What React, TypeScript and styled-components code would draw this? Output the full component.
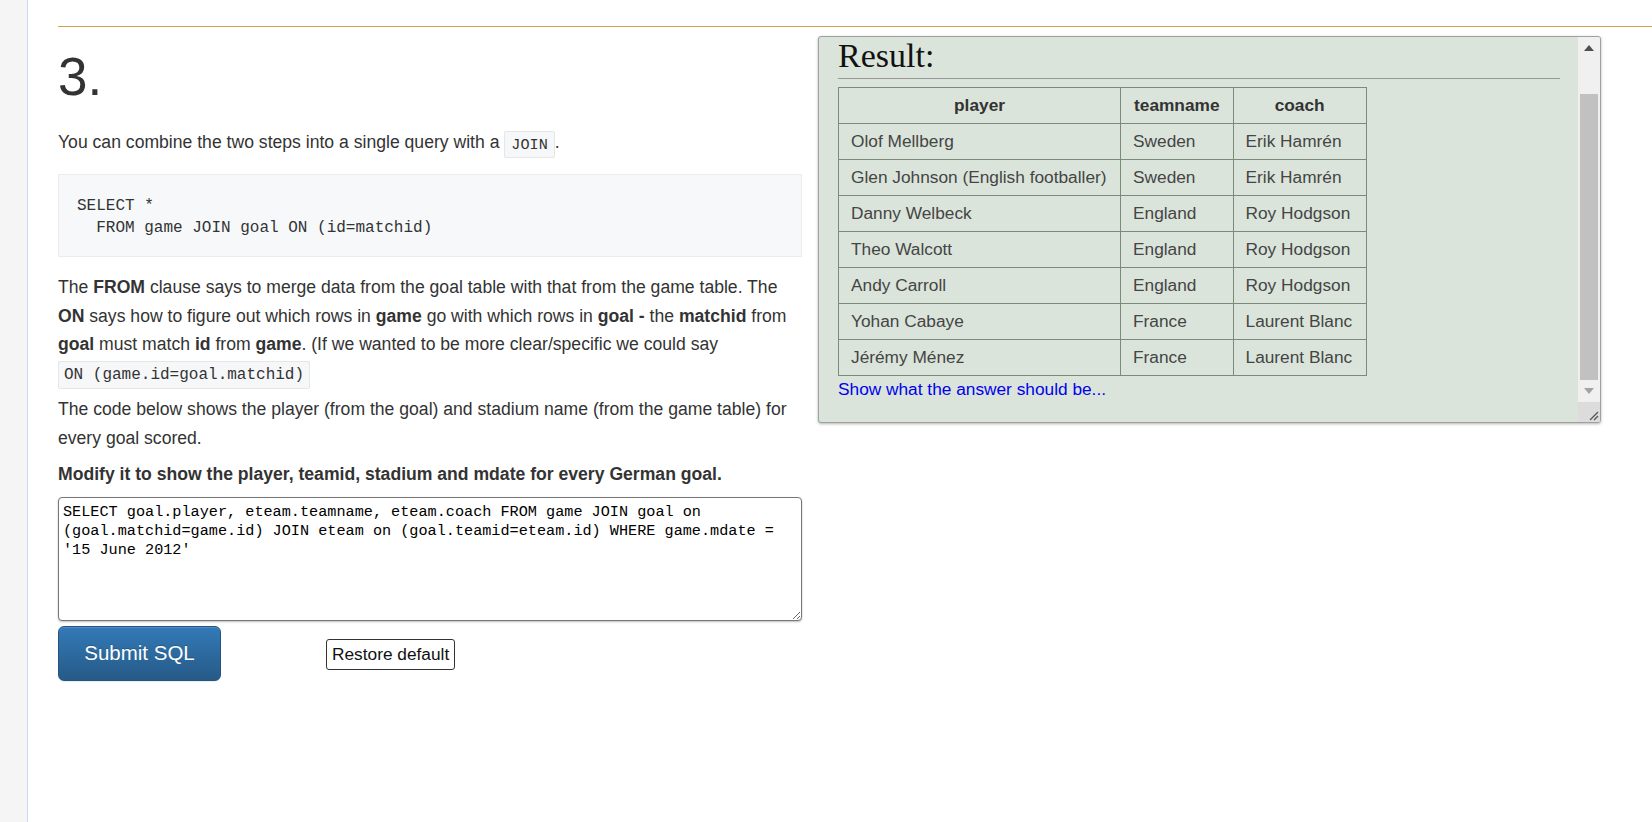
import React from "react";
import styled, { createGlobalStyle } from "styled-components";

const GlobalStyle = createGlobalStyle`
  html, body { margin: 0; padding: 0; background: #fff; }
  body { font-family: "Liberation Sans", Arial, sans-serif; color: #333; }
  * { box-sizing: border-box; }
`;

const Page = styled.div`
  display: flex;
  min-height: 822px;
`;

const LeftStrip = styled.div`
  width: 28px;
  flex: none;
  background: #f5f5f5;
  border-right: 1px solid #c5dcef;
`;

const Main = styled.div`
  flex: 1;
  padding-left: 30px;
`;

const Rule = styled.div`
  margin-top: 26px;
  border-top: 1px solid #d3a14f;
`;

const Row = styled.div`
  display: flex;
  align-items: flex-start;
  gap: 16px;
`;

const LeftCol = styled.div`
  width: 744px;
  flex: none;
`;

const Heading = styled.h1`
  margin: 21px 0 22px;
  font-size: 53px;
  line-height: 1.1;
  font-weight: 400;
  color: #333;
`;

const P = styled.p`
  margin: 0 0 7.5px;
  font-size: 17.6px;
  line-height: 28.8px;
  color: #333;
`;

const StrongP = styled(P)`
  font-weight: 700;
`;

const InlineCode = styled.code<{ $size: number; $pad: string }>`
  font-family: "Liberation Mono", monospace;
  font-size: ${(p) => p.$size}px;
  line-height: 1;
  padding: ${(p) => p.$pad};
  background: #f6f7f8;
  border: 1px solid #e6e6e6;
  border-radius: 2px;
  color: #333;
  white-space: nowrap;
`;

const Pre = styled.pre`
  margin: 17px 0 16px;
  padding: 19.8px 18px 16px;
  background: #f6f8fa;
  border: 1px solid #ececec;
  font-family: "Liberation Mono", monospace;
  font-size: 16px;
  line-height: 22.4px;
  color: #333;
`;

const SqlArea = styled.textarea`
  display: block;
  width: 744px;
  height: 124px;
  margin: 0;
  padding: 5.6px 4px;
  border: 1px solid #767676;
  border-radius: 4px;
  box-shadow: 0 1px 2px rgba(0, 0, 0, 0.25);
  font-family: "Liberation Mono", monospace;
  font-size: 15.2px;
  line-height: 18.7px;
  color: #000;
  background: #fff;
  resize: both;
`;

const ButtonRow = styled.div`
  display: flex;
  align-items: center;
  gap: 105px;
  margin-top: 5px;
`;

const SubmitButton = styled.button`
  width: 163px;
  height: 55px;
  padding: 0;
  border: 1px solid #245580;
  border-radius: 6px;
  background: linear-gradient(to bottom, #337ab7 0%, #265a88 100%);
  color: #fff;
  font-family: "Liberation Sans", Arial, sans-serif;
  font-size: 20.5px;
  text-shadow: 0 -1px 0 rgba(0, 0, 0, 0.2);
  box-shadow: inset 0 1px 0 rgba(255, 255, 255, 0.15), 0 1px 1px rgba(0, 0, 0, 0.075);
`;

const RestoreButton = styled.button`
  height: 31px;
  padding: 0 5px;
  margin-top: 3px;
  border: 1px solid #333;
  border-radius: 3px;
  background: #fff;
  color: #111;
  font-family: "Liberation Sans", Arial, sans-serif;
  font-size: 17.3px;
  line-height: 21px;
`;

const ResultBox = styled.div`
  margin-top: 9px;
  width: 783px;
  height: 387px;
  flex: none;
  display: flex;
  background: #dae4da;
  border: 1px solid #a0a0a0;
  border-radius: 3px;
  box-shadow: 0 1px 3px rgba(0, 0, 0, 0.3);
  overflow: hidden;
`;

const ResultContent = styled.div`
  flex: 1;
  padding: 0 18px 0 19px;
  overflow: hidden;
`;

const ResultTitle = styled.h2`
  margin: 0;
  padding-bottom: 4px;
  border-bottom: 1px solid #999;
  font-family: "Liberation Serif", "Times New Roman", serif;
  font-size: 34px;
  font-weight: 400;
  line-height: 37px;
  color: #111;
`;

const Table = styled.table`
  margin-top: 8px;
  border-collapse: collapse;
  font-size: 17.3px;
  line-height: 19px;
`;

const Th = styled.th`
  padding: 8px 13px;
  border: 1px solid #7b8a7b;
  font-weight: 700;
  text-align: center;
  color: #333;
`;

const Td = styled.td`
  padding: 8px 13.5px 8px 12px;
  border: 1px solid #7b8a7b;
  text-align: left;
  color: #454545;
  white-space: nowrap;
`;

const AnswerLink = styled.a`
  display: block;
  font-size: 17.3px;
  line-height: 26px;
  color: #0000ee;
  text-decoration: none;
`;

const ScrollBar = styled.div`
  width: 22px;
  flex: none;
  display: flex;
  flex-direction: column;
  background: #f0f0f0;
`;

const ScrollButton = styled.div`
  height: 22px;
  flex: none;
  display: flex;
  align-items: center;
  justify-content: center;
`;

const Arrow = styled.div<{ $up: boolean; $dim: boolean }>`
  width: 0;
  height: 0;
  border-left: 5.5px solid transparent;
  border-right: 5.5px solid transparent;
  ${(p) =>
    p.$up
      ? `border-bottom: 6px solid ${p.$dim ? "#a3a3a3" : "#505050"};`
      : `border-top: 6px solid ${p.$dim ? "#a3a3a3" : "#505050"};`}
`;

const Track = styled.div`
  flex: 1;
  display: flex;
  flex-direction: column;
  padding: 0 2px;
`;

const Thumb = styled.div<{ $offset: number }>`
  margin-top: ${(p) => p.$offset}px;
  flex: 1;
  background: #c1c1c1;
`;

const Corner = styled.div`
  height: 20px;
  flex: none;
  background: #dcdcdc;
  display: flex;
  align-items: flex-end;
  justify-content: flex-end;
`;

const rows: [string, string, string][] = [
  ["Olof Mellberg", "Sweden", "Erik Hamrén"],
  ["Glen Johnson (English footballer)", "Sweden", "Erik Hamrén"],
  ["Danny Welbeck", "England", "Roy Hodgson"],
  ["Theo Walcott", "England", "Roy Hodgson"],
  ["Andy Carroll", "England", "Roy Hodgson"],
  ["Yohan Cabaye", "France", "Laurent Blanc"],
  ["Jérémy Ménez", "France", "Laurent Blanc"],
];

const sql =
  "SELECT goal.player, eteam.teamname, eteam.coach FROM game JOIN goal on (goal.matchid=game.id) JOIN eteam on (goal.teamid=eteam.id) WHERE game.mdate = '15 June 2012'";

export default function App() {
  return (
    <>
      <GlobalStyle />
      <Page>
        <LeftStrip />
        <Main>
          <Rule />
          <Row>
            <LeftCol>
              <Heading>3.</Heading>
              <P>
                You can combine the two steps into a single query with a{" "}
                <InlineCode $size={15.2} $pad="3.5px 6px">JOIN</InlineCode>.
              </P>
              <Pre>{`SELECT *
  FROM game JOIN goal ON (id=matchid)`}</Pre>
              <P>
                The <b>FROM</b> clause says to merge data from the goal table with that from the game
                table. The <b>ON</b> says how to figure out which rows in <b>game</b> go with which
                rows in <b>goal -</b> the <b>matchid</b> from <b>goal</b> must match <b>id</b> from{" "}
                <b>game</b>. (If we wanted to be more clear/specific we could say{" "}
                <InlineCode $size={16} $pad="4px 5px">ON (game.id=goal.matchid)</InlineCode>
              </P>
              <P>
                The code below shows the player (from the goal) and stadium name (from the game
                table) for every goal scored.
              </P>
              <StrongP>Modify it to show the player, teamid, stadium and mdate for every German goal.</StrongP>
              <SqlArea defaultValue={sql} spellCheck={false} />
              <ButtonRow>
                <SubmitButton>Submit SQL</SubmitButton>
                <RestoreButton>Restore default</RestoreButton>
              </ButtonRow>
            </LeftCol>
            <ResultBox>
              <ResultContent>
                <ResultTitle>Result:</ResultTitle>
                <Table>
                  <thead>
                    <tr>
                      <Th>player</Th>
                      <Th>teamname</Th>
                      <Th>coach</Th>
                    </tr>
                  </thead>
                  <tbody>
                    {rows.map((r, i) => (
                      <tr key={i}>
                        <Td>{r[0]}</Td>
                        <Td>{r[1]}</Td>
                        <Td>{r[2]}</Td>
                      </tr>
                    ))}
                  </tbody>
                </Table>
                <AnswerLink href="#">Show what the answer should be...</AnswerLink>
              </ResultContent>
              <ScrollBar>
                <ScrollButton>
                  <Arrow $up={true} $dim={false} />
                </ScrollButton>
                <Track>
                  <Thumb $offset={35} />
                </Track>
                <ScrollButton>
                  <Arrow $up={false} $dim={true} />
                </ScrollButton>
                <Corner>
                  <svg width="12" height="12" viewBox="0 0 12 12">
                    <line x1="2" y1="10" x2="10" y2="2" stroke="#555" strokeWidth="1.2" />
                    <line x1="6" y1="10" x2="10" y2="6" stroke="#555" strokeWidth="1.2" />
                  </svg>
                </Corner>
              </ScrollBar>
            </ResultBox>
          </Row>
        </Main>
      </Page>
    </>
  );
}
